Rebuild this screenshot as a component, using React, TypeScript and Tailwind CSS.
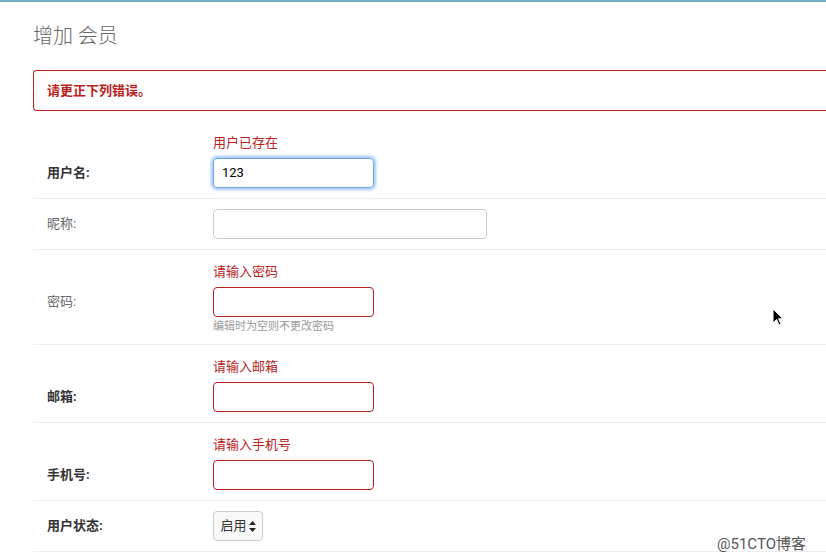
const font = { fontFamily: '"Roboto", "Noto Sans CJK SC", sans-serif' };

type Row = {
  label: string;
  bold?: boolean;
  error?: string;
  value?: string;
  width?: string;
  focused?: boolean;
  help?: string;
  select?: boolean;
};

const rows: Row[] = [
  { label: "用户名:", bold: true, error: "用户已存在", value: "123", focused: true },
  { label: "昵称:", width: "w-[274px]" },
  { label: "密码:", error: "请输入密码", help: "编辑时为空则不更改密码" },
  { label: "邮箱:", bold: true, error: "请输入邮箱" },
  { label: "手机号:", bold: true, error: "请输入手机号" },
  { label: "用户状态:", bold: true, select: true },
];

export default function App() {
  return (
    <div className="relative w-[826px] h-[560px] overflow-hidden bg-white border-t-2 border-[#79aec8]" style={font}>
      <div className="pl-[33px] pt-[20px]">
        <h1 className="text-[20px] font-light text-[#666] leading-[28px]">增加 会员</h1>
        <div className="mt-[20px] h-[41px] border border-[#ba2121] rounded-l-[4px] border-r-0 flex items-center pl-[13px] text-[13px] font-bold text-[#ba2121]">
          请更正下列错误。
        </div>
        <div className="mt-[10px]">
          {rows.map((r) => (
            <div
              key={r.label}
              className={`flex border-b border-[#eee] pl-[14px] ${r.error ? "pt-[13px]" : "pt-[10px]"} pb-[10px]`}
            >
              <div className="w-[166px] flex flex-col">
                {r.error && <div className="h-[24px]" />}
                <div
                  className={`h-[30px] flex items-center text-[13px] ${r.bold ? "font-bold text-[#333]" : "text-[#666]"}`}
                >
                  {r.label}
                </div>
              </div>
              <div className="flex flex-col">
                {r.error && (
                  <div className="h-[18px] leading-[18px] mb-[6px] text-[13px] text-[#ba2121]">{r.error}</div>
                )}
                {r.select ? (
                  <div className="h-[30px] w-[50px] border border-[#ccc] rounded-[4px] bg-[#f8f8f8] flex items-center justify-center gap-[2px] text-[13px] text-[#333]">
                    启用
                    <svg width="7" height="11" viewBox="0 0 7 11">
                      <path d="M3.5 0L7 4H0z M3.5 11L0 7h7z" fill="#222" />
                    </svg>
                  </div>
                ) : (
                  <div
                    className={`h-[30px] ${r.width ?? "w-[161px]"} rounded-[4px] border flex items-center px-[8px] text-[13px] text-black ${
                      r.focused
                        ? "border-[#6fa3e8] shadow-[0_0_3px_2px_rgba(100,160,240,0.6)]"
                        : r.error
                          ? "border-[#ba2121]"
                          : "border-[#ccc]"
                    }`}
                  >
                    {r.value}
                  </div>
                )}
                {r.help && <div className="mt-[3px] leading-[14px] text-[11px] text-[#999]">{r.help}</div>}
              </div>
            </div>
          ))}
        </div>
      </div>
      <svg className="absolute left-[772px] top-[306px]" width="12" height="18" viewBox="0 0 12 18">
        <path d="M1 1v14l3.5-3.5 2.5 5.5 2-1-2.5-5.2H11z" fill="#000" stroke="#fff" strokeWidth="1" />
      </svg>
      <div className="absolute left-[717px] top-[531px] text-[15px] text-[#555]">@51CTO博客</div>
    </div>
  );
}
